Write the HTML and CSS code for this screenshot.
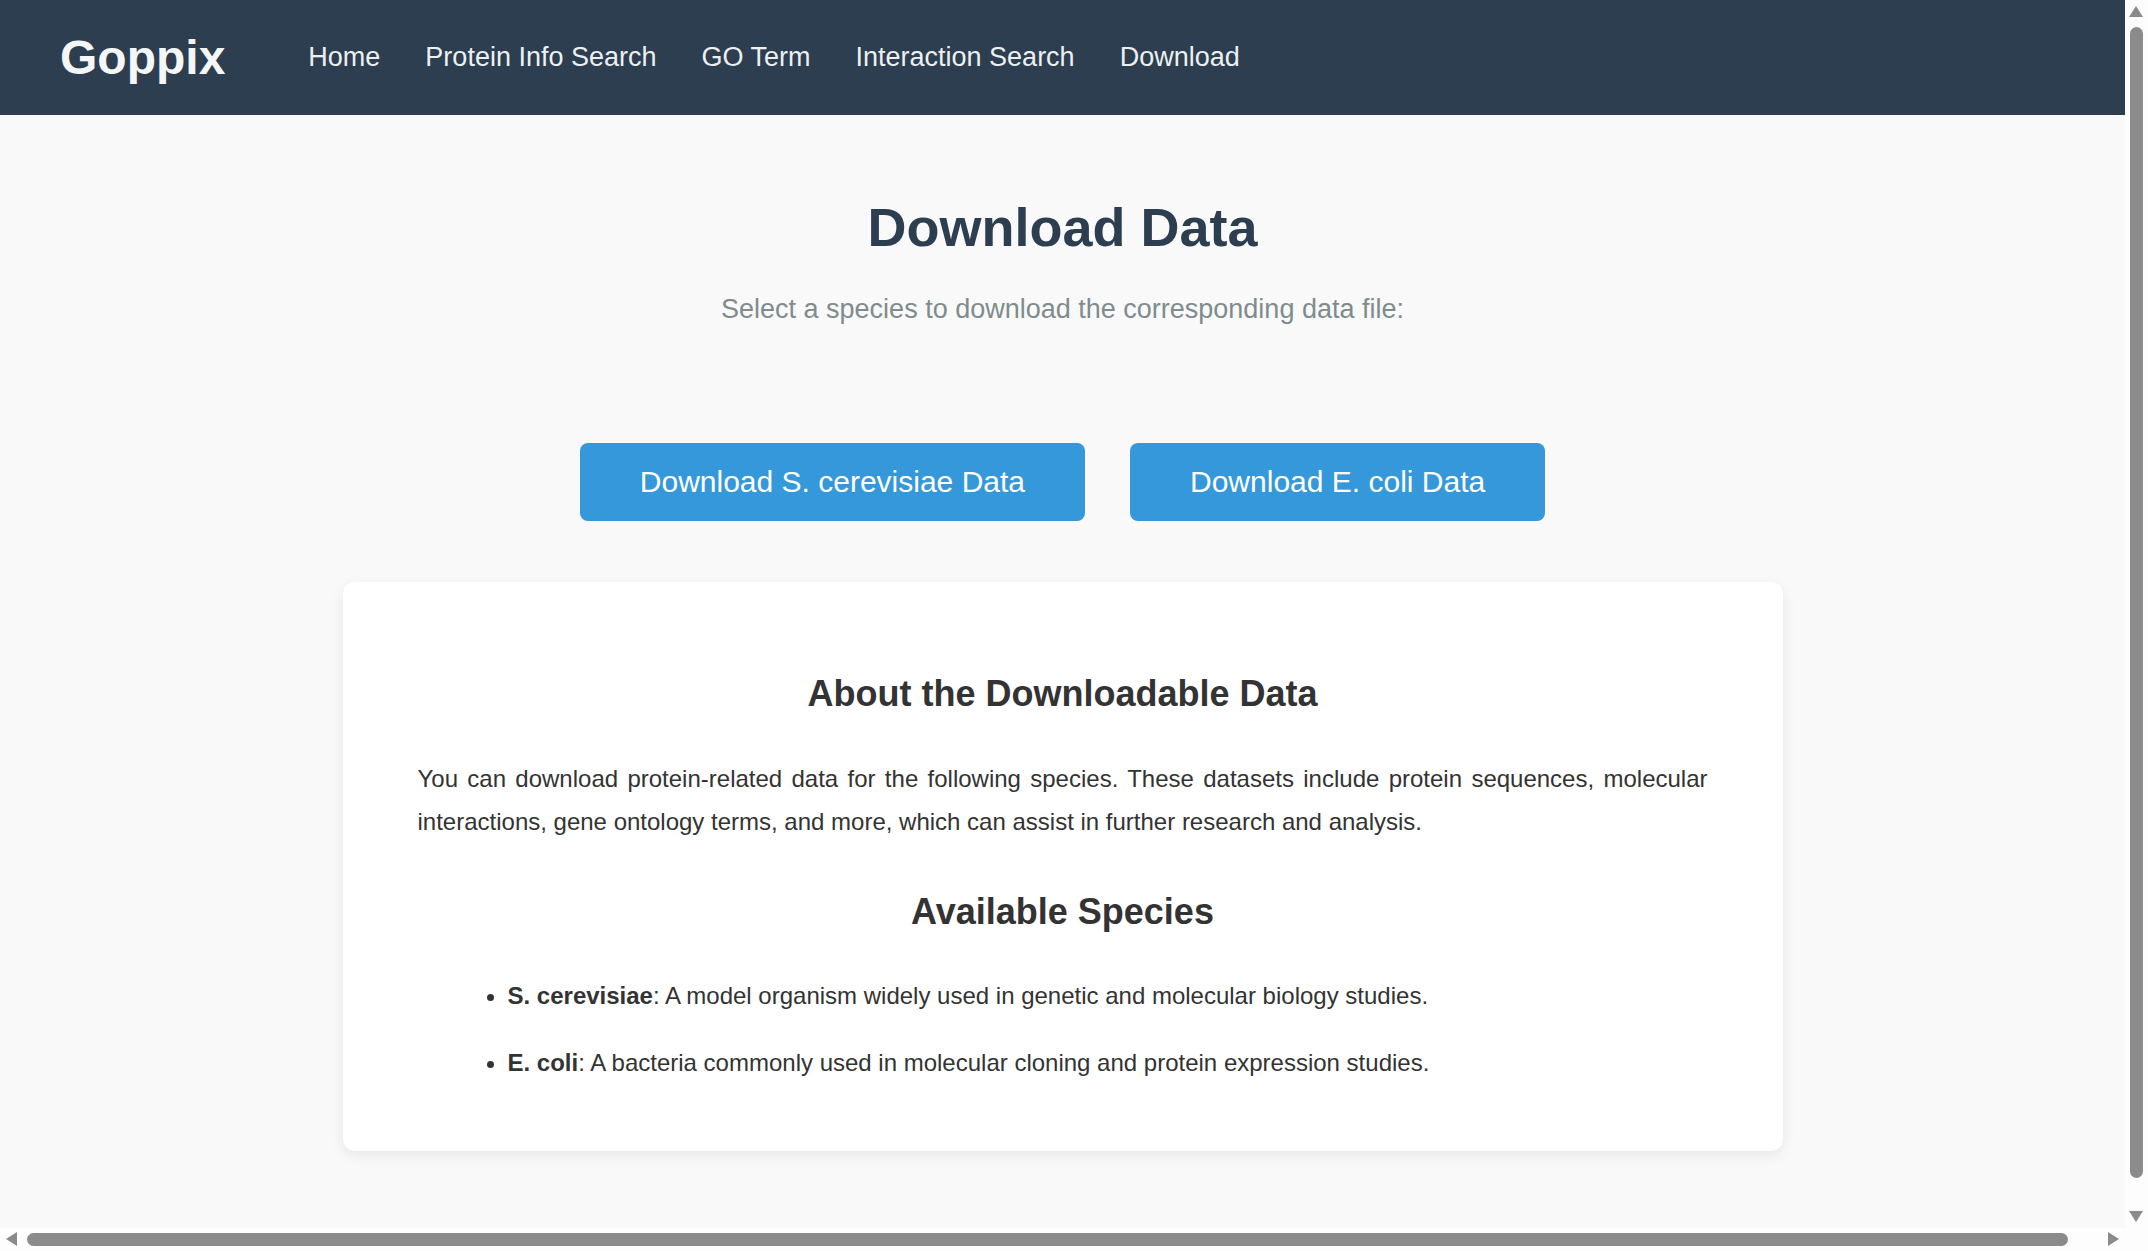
FILE: index.html
```html
<!DOCTYPE html>
<html lang="en">
<head>
<meta charset="utf-8">
<title>Goppix - Download Data</title>
<link rel="stylesheet" href="styles.css">
</head>
<body>
<header class="navbar">
  <div class="logo">Goppix</div>
  <nav class="nav-links">
    <a href="#">Home</a>
    <a href="#">Protein Info Search</a>
    <a href="#">GO Term</a>
    <a href="#">Interaction Search</a>
    <a href="#">Download</a>
  </nav>
</header>
<main class="page">
  <h1 class="title">Download Data</h1>
  <p class="subtitle">Select a species to download the corresponding data file:</p>
  <div class="button-row">
    <a class="btn" href="#">Download S. cerevisiae Data</a>
    <a class="btn" href="#">Download E. coli Data</a>
  </div>
  <section class="card">
    <h2 class="card-title first">About the Downloadable Data</h2>
    <p class="card-text">You can download protein-related data for the following species. These datasets include protein sequences, molecular interactions, gene ontology terms, and more, which can assist in further research and analysis.</p>
    <h2 class="card-title">Available Species</h2>
    <ul class="species">
      <li><strong>S. cerevisiae</strong>: A model organism widely used in genetic and molecular biology studies.</li>
      <li><strong>E. coli</strong>: A bacteria commonly used in molecular cloning and protein expression studies.</li>
    </ul>
  </section>
</main>
<div class="scrollbar vertical" aria-hidden="true">
  <span class="arrow up"></span>
  <span class="thumb"></span>
  <span class="arrow down"></span>
</div>
<div class="scrollbar horizontal" aria-hidden="true">
  <span class="arrow left"></span>
  <span class="thumb"></span>
  <span class="arrow right"></span>
</div>
</body>
</html>
```

FILE: styles.css
```css
html, body {
  margin: 0;
  padding: 0;
}

html {
  overflow: hidden;
}

body {
  padding: 0 23px 23px 0;
  font-family: "Liberation Sans", Arial, sans-serif;
  background: #f9f9f9;
  color: #333;
}

.navbar {
  height: 115px;
  padding: 0 60px;
  background: #2c3e50;
  display: flex;
  align-items: center;
}

.logo {
  margin-right: 83px;
  font-size: 48px;
  font-weight: bold;
  color: #f4f6f7;
}

.nav-links {
  display: flex;
  gap: 45px;
}

.nav-links a {
  color: #ecf0f1;
  text-decoration: none;
  font-size: 27px;
}

.page {
  padding: 81px 0 90px;
  text-align: center;
}

.title {
  margin: 0 0 36px;
  font-size: 54px;
  line-height: 62px;
  color: #2c3e50;
}

.subtitle {
  margin: 0;
  font-size: 27px;
  line-height: 31px;
  color: #7f8c8d;
}

.button-row {
  display: flex;
  justify-content: center;
  gap: 45px;
  margin: 118px 0 61px;
}

.btn {
  display: block;
  padding: 22px 60px;
  font-size: 30px;
  line-height: 34px;
  color: #fff;
  background: #3498db;
  border-radius: 8px;
  text-decoration: none;
}

.card {
  width: 1440px;
  box-sizing: border-box;
  margin: 0 auto;
  padding: 45px 75px 44px;
  background: #fff;
  border-radius: 12px;
  box-shadow: 0 4px 14px rgba(0, 0, 0, 0.08);
  text-align: left;
}

.card-title {
  margin: 36px 0 30px;
  font-size: 36px;
  line-height: 65px;
  color: #333;
  text-align: center;
}

.card-title.first {
  margin-top: 34px;
  margin-bottom: 31px;
}

.card-text {
  margin: 0;
  font-size: 24px;
  line-height: 43.2px;
  text-align: justify;
}

.species {
  margin: 0;
  padding-left: 90px;
  font-size: 24px;
  line-height: 43.2px;
}

.species li {
  margin-bottom: 23px;
}

/* window scrollbars drawn over the page edge */
.scrollbar {
  position: fixed;
  background: #fdfdfd;
}

.scrollbar.vertical {
  top: 0;
  right: 0;
  width: 23px;
  bottom: 23px;
}

.scrollbar.horizontal {
  left: 0;
  right: 0;
  bottom: 0;
  height: 23px;
}

.scrollbar .thumb {
  position: absolute;
  background: #8b8b8b;
  border-radius: 7px;
}

.scrollbar.vertical .thumb {
  left: 5px;
  width: 13px;
  top: 27px;
  height: 1151px;
}

.scrollbar.horizontal .thumb {
  top: 5px;
  height: 13px;
  left: 27px;
  width: 2041px;
}

.scrollbar .arrow {
  position: absolute;
  width: 0;
  height: 0;
  border: 7px solid transparent;
}

.arrow.up {
  left: 4px;
  top: -1px;
  border-bottom: 11px solid #8b8b8b;
}

.arrow.down {
  left: 4px;
  top: 1211px;
  border-top: 11px solid #8b8b8b;
}

.arrow.left {
  left: -1px;
  top: 4px;
  border-right: 11px solid #8b8b8b;
}

.arrow.right {
  left: 2108px;
  top: 4px;
  border-left: 11px solid #8b8b8b;
}
```
